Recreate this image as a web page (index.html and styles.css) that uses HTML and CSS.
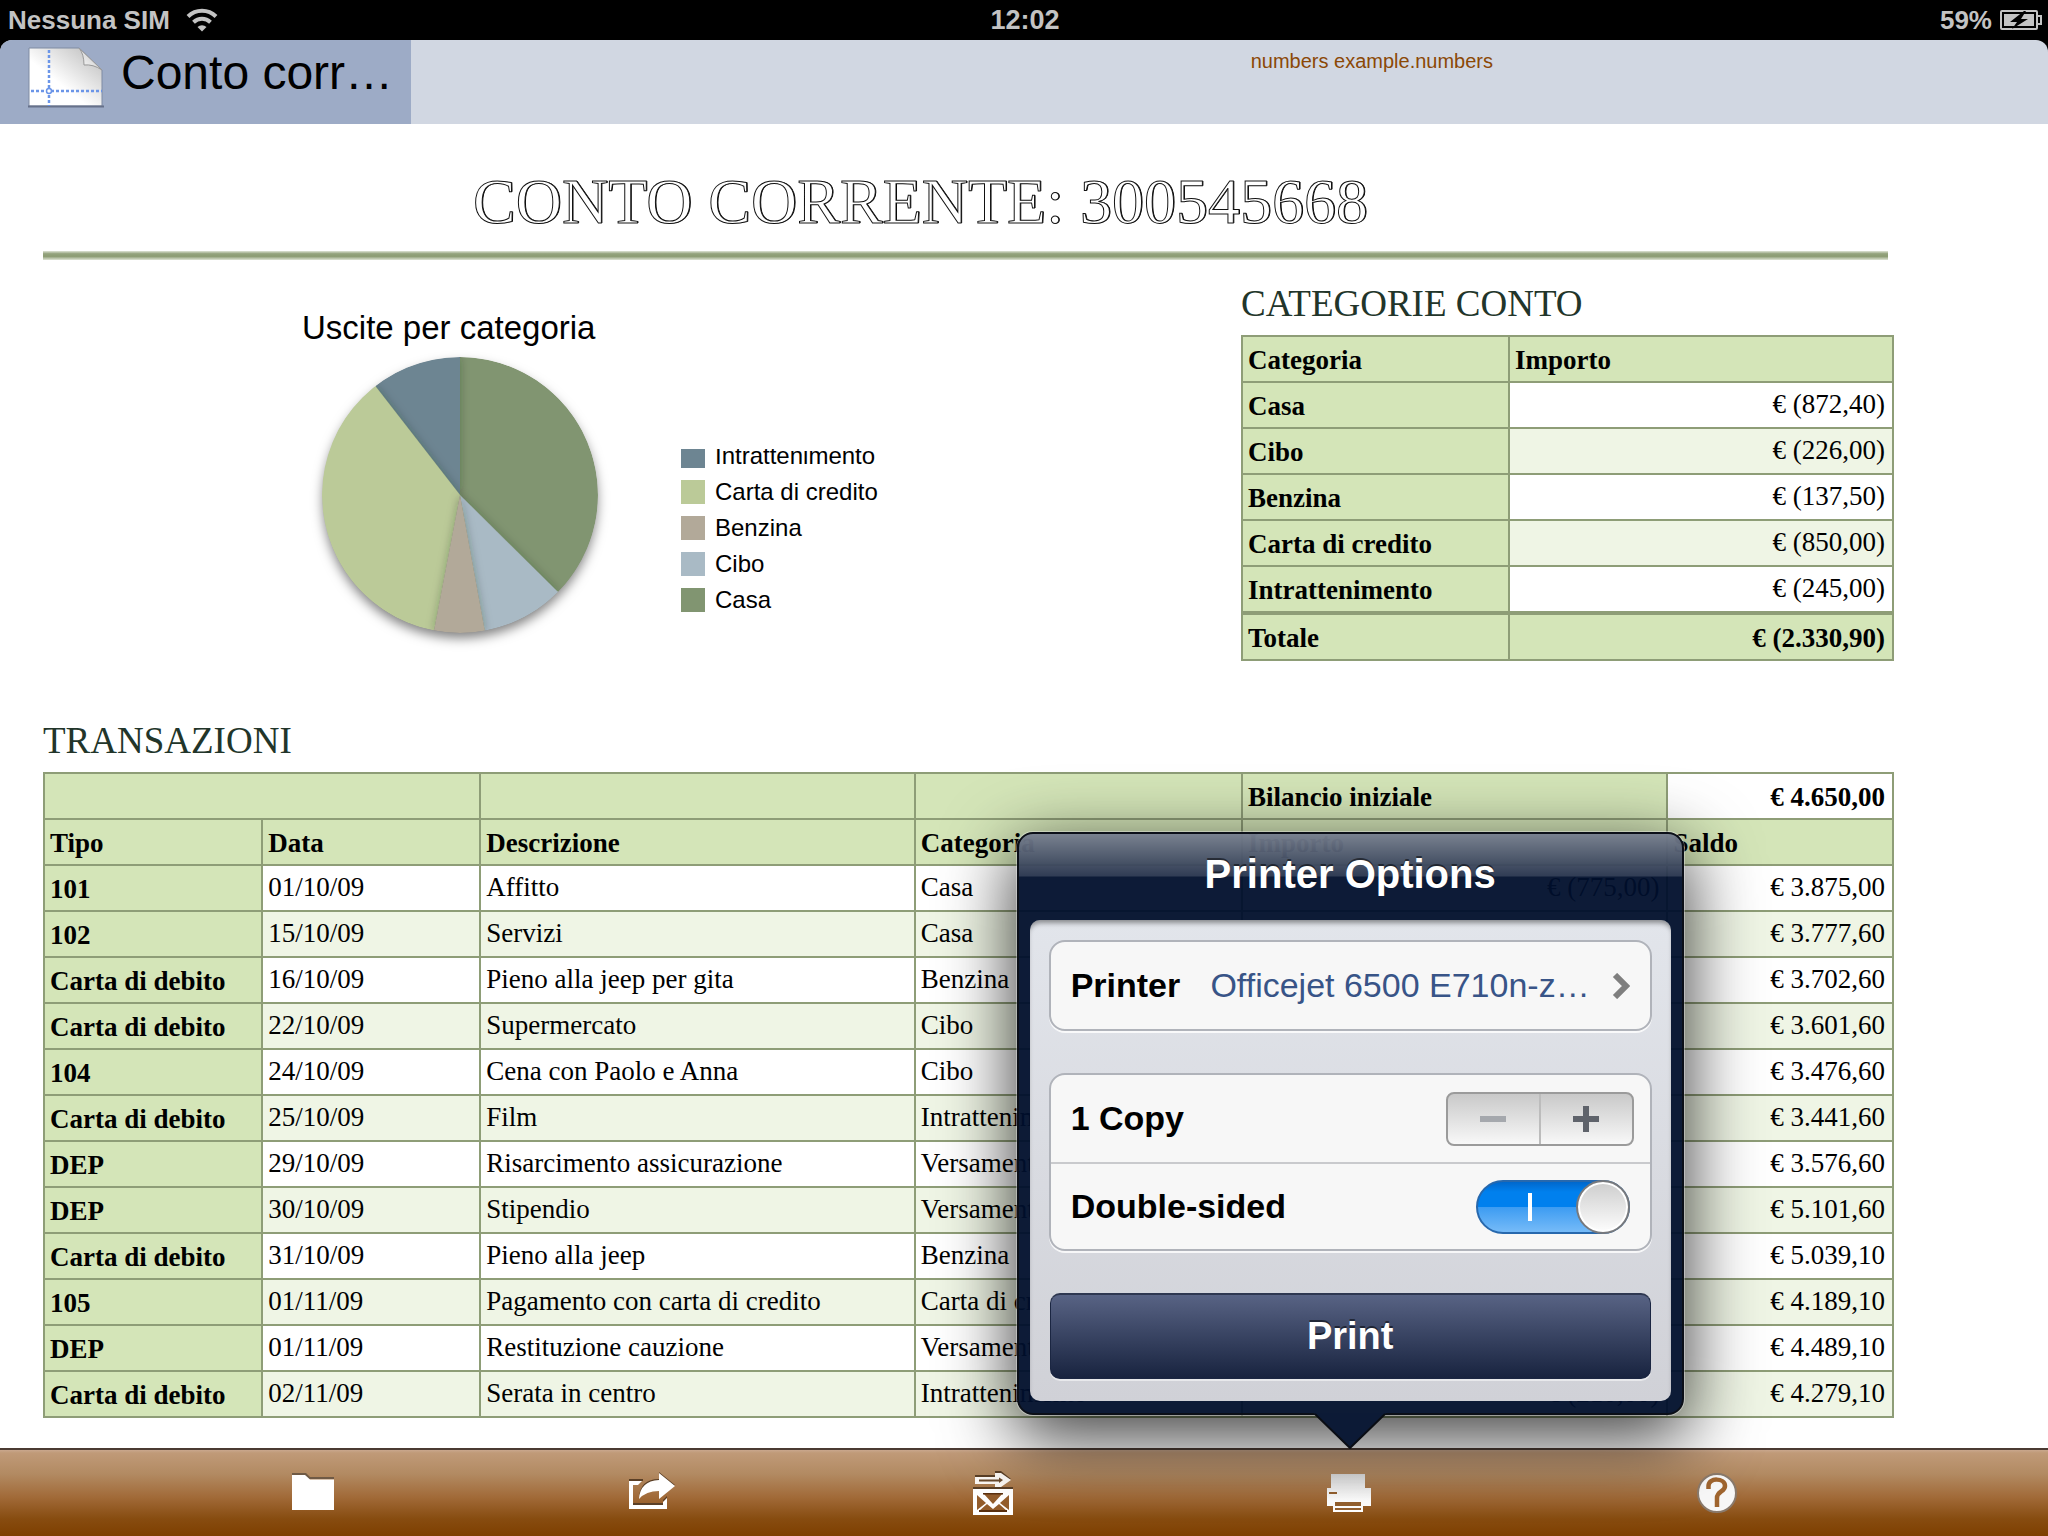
FILE: index.html
```html
<!DOCTYPE html>
<html lang="it">
<head>
<meta charset="utf-8">
<meta name="viewport" content="width=device-width, initial-scale=1">
<title>numbers example.numbers</title>
<link rel="stylesheet" href="styles.css">
</head>
<body>
<div class="app">
  <header class="status">
    <div class="status-side">
      <span>Nessuna SIM</span>
      <svg class="wifi" viewBox="0 0 32 24" width="32" height="24" aria-hidden="true">
        <path d="M2 8.500A20 20 0 0 1 30 8.500" fill="none" stroke="#c3c3c3" stroke-width="4"/>
        <path d="M7.500 14.200A12.500 12.500 0 0 1 24.500 14.200" fill="none" stroke="#c3c3c3" stroke-width="4"/>
        <path d="M16 23.500L11.500 19A6.500 6.500 0 0 1 20.500 19Z" fill="#c3c3c3"/>
      </svg>
    </div>
    <time class="clock">12:02</time>
    <div class="status-side status-right">
      <span>59%</span>
      <svg viewBox="0 0 42 20" width="42" height="20" aria-hidden="true">
        <rect x="1" y="1" width="36" height="18" rx="1" fill="none" stroke="#c3c3c3" stroke-width="2"/>
        <path d="M38 6h3v8h-3" fill="none" stroke="#c3c3c3" stroke-width="2"/>
        <rect x="4" y="4" width="30" height="12" fill="#c3c3c3"/>
        <path d="M24 1L10 12H17L12 19L28 9H21L26 1Z" fill="#000"/>
      </svg>
    </div>
  </header>

  <nav class="tabs">
    <button class="tab" type="button">
      <svg class="doc" viewBox="0 0 78 62" width="78" height="62" aria-hidden="true">
        <defs>
          <linearGradient id="paper" x1="1" y1="0" x2="0" y2="1"><stop offset="0" stop-color="#b8b8b8"/><stop offset=".6" stop-color="#fff"/></linearGradient>
          <linearGradient id="fold" x1="1" y1="0" x2="0" y2="1"><stop offset="0" stop-color="#bbb"/><stop offset="1" stop-color="#fff"/></linearGradient>
        </defs>
        <path d="M2 2H52L75 24V60H2Z" fill="url(#paper)" stroke="#7f8ba3" stroke-width="1"/>
        <path d="M1 60.500H77" stroke="#66718a" stroke-width="2"/>
        <path d="M52 2Q57 8 57 19Q66 18 75 24Z" fill="url(#fold)" stroke="#999" stroke-width="1"/>
        <path d="M22 4V60M4 45H75" fill="none" stroke="#6b95e8" stroke-width="2.500" stroke-dasharray="3 2"/>
        <circle cx="22" cy="45" r="2.500" fill="#fff" stroke="#6b95e8" stroke-width="1.500"/>
      </svg>
      <span>Conto corr…</span>
    </button>
    <span class="filename">numbers example.numbers</span>
  </nav>

  <main class="sheet">
    <h1 class="title">CONTO CORRENTE: 300545668</h1>
    <hr class="rule">
    <div class="summary">
      <figure class="chart">
        <figcaption class="chart-title">Uscite per categoria</figcaption>
        <div class="chart-body">
          <svg viewBox="-158 -147 316 310" width="316" height="310" role="img" aria-label="Uscite per categoria">
            <defs>
              <clipPath id="disc"><circle r="138"/></clipPath>
              <filter id="edge" x="-20%" y="-20%" width="140%" height="140%"><feDropShadow dx="0" dy="0" stdDeviation="5" flood-color="#1c2a20" flood-opacity=".3"/></filter>
              <filter id="cast" x="-20%" y="-20%" width="140%" height="140%"><feDropShadow dx="0" dy="6" stdDeviation="6" flood-opacity=".5"/></filter>
            </defs>
            <circle r="137" fill="#819571" filter="url(#cast)"/>
            <g clip-path="url(#disc)">
              <path d="M0 0V-138A138 138 0 0 1 98 97.100Z" fill="#819571"/>
              <path d="M0 0L-84.700 -109A138 138 0 0 1 0 -138Z" fill="#6d8592" filter="url(#edge)"/>
              <path d="M0 0L-26 135.500A138 138 0 0 1 -84.700 -109Z" fill="#bbca98" filter="url(#edge)"/>
              <path d="M0 0L98 97.100A138 138 0 0 1 24.800 135.700Z" fill="#a9bac5" filter="url(#edge)"/>
              <path d="M0 0L24.800 135.700A138 138 0 0 1 -26 135.500Z" fill="#b2a999" filter="url(#edge)"/>
            </g>
          </svg>
          <ul class="legend">
            <li><i class="swatch intrattenimento"></i>Intrattenimento</li>
            <li><i class="swatch carta"></i>Carta di credito</li>
            <li><i class="swatch benzina"></i>Benzina</li>
            <li><i class="swatch cibo"></i>Cibo</li>
            <li><i class="swatch casa"></i>Casa</li>
          </ul>
        </div>
      </figure>
      <section>
        <h2 class="heading">CATEGORIE CONTO</h2>
        <table class="grid categories">
          <colgroup><col class="cat-name"><col></colgroup>
          <thead><tr><th>Categoria</th><th>Importo</th></tr></thead>
          <tbody>
            <tr><th>Casa</th><td class="num">€ (872,40)</td></tr>
            <tr><th>Cibo</th><td class="num">€ (226,00)</td></tr>
            <tr><th>Benzina</th><td class="num">€ (137,50)</td></tr>
            <tr><th>Carta di credito</th><td class="num">€ (850,00)</td></tr>
            <tr><th>Intrattenimento</th><td class="num">€ (245,00)</td></tr>
          </tbody>
          <tfoot><tr><th>Totale</th><th class="num">€ (2.330,90)</th></tr></tfoot>
        </table>
      </section>
    </div>

    <section>
      <h2 class="heading">TRANSAZIONI</h2>
      <table class="grid transactions">
        <colgroup><col class="c-tipo"><col class="c-data"><col class="c-desc"><col class="c-cat"><col class="c-imp"><col class="c-saldo"></colgroup>
        <thead>
          <tr><th colspan="2"></th><th></th><th></th><th>Bilancio iniziale</th><th class="num opening">€ 4.650,00</th></tr>
          <tr><th>Tipo</th><th>Data</th><th>Descrizione</th><th>Categoria</th><th>Importo</th><th>Saldo</th></tr>
        </thead>
        <tbody>
          <tr><th>101</th><td>01/10/09</td><td>Affitto</td><td>Casa</td><td class="num">€ (775,00)</td><td class="num">€ 3.875,00</td></tr>
          <tr><th>102</th><td>15/10/09</td><td>Servizi</td><td>Casa</td><td class="num">€ (97,40)</td><td class="num">€ 3.777,60</td></tr>
          <tr><th>Carta di debito</th><td>16/10/09</td><td>Pieno alla jeep per gita</td><td>Benzina</td><td class="num">€ (75,00)</td><td class="num">€ 3.702,60</td></tr>
          <tr><th>Carta di debito</th><td>22/10/09</td><td>Supermercato</td><td>Cibo</td><td class="num">€ (101,00)</td><td class="num">€ 3.601,60</td></tr>
          <tr><th>104</th><td>24/10/09</td><td>Cena con Paolo e Anna</td><td>Cibo</td><td class="num">€ (125,00)</td><td class="num">€ 3.476,60</td></tr>
          <tr><th>Carta di debito</th><td>25/10/09</td><td>Film</td><td>Intrattenimento</td><td class="num">€ (35,00)</td><td class="num">€ 3.441,60</td></tr>
          <tr><th>DEP</th><td>29/10/09</td><td>Risarcimento assicurazione</td><td>Versamento</td><td class="num">€ 135,00</td><td class="num">€ 3.576,60</td></tr>
          <tr><th>DEP</th><td>30/10/09</td><td>Stipendio</td><td>Versamento</td><td class="num">€ 1.525,00</td><td class="num">€ 5.101,60</td></tr>
          <tr><th>Carta di debito</th><td>31/10/09</td><td>Pieno alla jeep</td><td>Benzina</td><td class="num">€ (62,50)</td><td class="num">€ 5.039,10</td></tr>
          <tr><th>105</th><td>01/11/09</td><td>Pagamento con carta di credito</td><td>Carta di credito</td><td class="num">€ (850,00)</td><td class="num">€ 4.189,10</td></tr>
          <tr><th>DEP</th><td>01/11/09</td><td>Restituzione cauzione</td><td>Versamento</td><td class="num">€ 300,00</td><td class="num">€ 4.489,10</td></tr>
          <tr><th>Carta di debito</th><td>02/11/09</td><td>Serata in centro</td><td>Intrattenimento</td><td class="num">€ (210,00)</td><td class="num">€ 4.279,10</td></tr>
        </tbody>
      </table>
    </section>
  </main>

  <footer class="toolbar">
    <button type="button" aria-label="Apri">
      <svg viewBox="0 0 44 44" width="44" height="44" aria-hidden="true">
        <path d="M1 2H15L19 6H43V8H1Z" fill="#6f5a45"/>
        <path d="M1 4H14L19 8.500H43V39H1Z" fill="#fff"/>
      </svg>
    </button>
    <button type="button" aria-label="Condividi">
      <svg viewBox="0 0 46 44" width="46" height="44" aria-hidden="true">
        <path d="M0 8H14V10H0ZM4 32H34V34H4ZM30 1L46 14L44 15L30 3ZM10 27Q11 8 30 8V10Q14 10 10 27ZM34 29L38 25V27L34 31Z" fill="#5a3f26"/>
        <path d="M0 10H13L9 14H4V34H34V31L38 27V38H0Z" fill="#fff"/>
        <path d="M30 2L46 15L30 28V20Q17 20 10 28Q11 10 30 9Z" fill="#fff"/>
      </svg>
    </button>
    <button type="button" aria-label="Invia per e-mail">
      <svg viewBox="0 0 40 44" width="40" height="44" aria-hidden="true">
        <path d="M2 4H22V0H28L38 8H30V6H2ZM0 16H40V18H0Z" fill="#5a3f26"/>
        <path d="M2 6H22V2H28L38 9L28 16H22V13H2Z" fill="#fcf8f4"/>
        <path d="M6 8.500H26V6.500L30 9L26 12V10.500H6Z" fill="#6b4a2c"/>
        <rect y="18" width="40" height="26" fill="#fff"/>
        <path d="M10 22H30L20 33ZM4 24L13 32L4 39ZM36 24L27 32L36 39ZM6 40L14 33L20 38L26 33L34 40Z" fill="#945d2c"/>
        <path d="M10 22H30V23.500H10ZM6 39H34V41H6Z" fill="#5a3010"/>
      </svg>
    </button>
    <button type="button" aria-label="Stampa">
      <svg viewBox="0 0 44 38" width="44" height="38" aria-hidden="true">
        <defs><linearGradient id="printer" x1="0" y1="0" x2="0" y2="1"><stop offset="0" stop-color="#ddd"/><stop offset=".7" stop-color="#fff"/></linearGradient></defs>
        <path d="M4 0H38V14H44V32H36V38H6V32H0V14H4Z" fill="url(#printer)"/>
        <path d="M2 18H10V20H2ZM8 28H34V32H8ZM8 34H34V36H8Z" fill="#94602e"/>
      </svg>
    </button>
    <button type="button" aria-label="Aiuto">
      <svg viewBox="0 0 42 42" width="42" height="42" aria-hidden="true">
        <circle cx="21" cy="21" r="19" fill="#f8f8f8" stroke="#8a7a6c" stroke-width="2"/>
        <path d="M12.500 17V14C12.500 5 29 6 29 14C29 20 21 19 21 26V35" fill="none" stroke="#a0652f" stroke-width="4.500"/>
      </svg>
    </button>
  </footer>

  <section class="popover" role="dialog" aria-labelledby="options-title">
    <div class="panel">
      <h2 class="panel-title" id="options-title">Printer Options</h2>
      <form class="panel-body">
        <div class="group">
          <button class="row link" type="button">
            <span class="label">Printer</span>
            <span class="value">Officejet 6500 E710n-z…</span>
            <svg viewBox="0 0 18 26" width="18" height="26" aria-hidden="true"><path d="M3 2L14 13L3 24" fill="none" stroke="#7f7f7f" stroke-width="6"/></svg>
          </button>
        </div>
        <div class="group">
          <div class="row">
            <span class="label">1 Copy</span>
            <div class="stepper">
              <button type="button" aria-label="Fewer copies" disabled><svg viewBox="0 0 28 28" width="28" height="28" aria-hidden="true"><path d="M1 14H27" stroke="#a5a8ad" stroke-width="6"/></svg></button>
              <button type="button" aria-label="More copies"><svg viewBox="0 0 28 28" width="28" height="28" aria-hidden="true"><path d="M1 14H27M14 1V27" stroke="#5f636b" stroke-width="6"/></svg></button>
            </div>
          </div>
          <div class="row">
            <label class="label" for="duplex">Double-sided</label>
            <input class="switch" id="duplex" type="checkbox" checked>
          </div>
        </div>
        <button class="print" type="button">Print</button>
      </form>
    </div>
    <svg class="arrow" viewBox="0 0 72 36" width="72" height="36" aria-hidden="true"><path d="M0 0L36 35L72 0Z" fill="#0c1a36"/><path d="M1 1L36 35L71 1" fill="none" stroke="#0a0d14" stroke-width="2"/></svg>
  </section>
</div>
</body>
</html>
```
FILE: styles.css
```css
*,
*::before,
*::after {
  box-sizing: border-box;
}

body {
  margin: 0;
  background: #000;
  color: #000;
  font-family: "Liberation Sans", Arial, sans-serif;
}

button {
  margin: 0;
  padding: 0;
  border: 0;
  background: none;
  color: inherit;
  font: inherit;
}

.app {
  position: relative;
  display: flex;
  flex-direction: column;
  min-height: 100vh;
  overflow: hidden;
}

/* Status bar */
.status {
  display: grid;
  grid-template-columns: 1fr auto 1fr;
  align-items: center;
  height: 40px;
  padding: 0 6px 0 8px;
  color: #c3c3c3;
  font-size: 26px;
  font-weight: bold;
}

.status-side {
  display: flex;
  align-items: center;
  gap: 16px;
}

.status-right {
  justify-content: flex-end;
  gap: 8px;
}

.clock {
  font-size: 27px;
}

/* Document tabs */
.tabs {
  display: flex;
  align-items: stretch;
  height: 84px;
  border-radius: 12px 12px 0 0;
  background: #d1d7e2;
  overflow: hidden;
}

.tab {
  display: flex;
  align-items: flex-start;
  gap: 16px;
  width: 411px;
  padding: 6px 0 0 27px;
  background: #9dabc6;
  font-size: 48px;
  line-height: 54px;
  white-space: nowrap;
}

.filename {
  margin: 9px 0 0 41%;
  color: #8b4806;
  font-size: 20px;
  line-height: 24px;
}

/* Spreadsheet */
.sheet {
  flex: 1;
  padding: 40px 154px 20px 43px;
  background: #fff;
  font-family: "Liberation Serif", "Times New Roman", serif;
}

.title {
  margin: 0;
  padding-right: 96px;
  color: #fff;
  font-size: 64px;
  font-weight: normal;
  line-height: 76px;
  text-align: center;
  text-shadow: 1px 0 0 #000;
  -webkit-text-stroke: 1px #111;
}

.rule {
  height: 9px;
  margin: 11px 6px 22px 0;
  border: 0;
  background: linear-gradient(#dfe4d6, #94a37d 30%, #8c9c73 60%, #dfe4d6);
}

.summary {
  display: grid;
  grid-template-columns: 1fr 653px;
  margin-bottom: 58px;
}

.chart {
  margin: 26px 0 0 259px;
  font-family: "Liberation Sans", Arial, sans-serif;
}

.chart-title {
  font-size: 33px;
  line-height: 40px;
}

.chart-body {
  display: flex;
  align-items: flex-start;
  gap: 63px;
}

.legend {
  display: flex;
  flex-direction: column;
  gap: 12px;
  margin: 101px 0 0;
  padding: 0;
  overflow: hidden;
  list-style: none;
  font-size: 24px;
  line-height: 24px;
}

.legend li {
  display: flex;
  gap: 10px;
}

.legend li:first-child {
  margin-top: -5px;
}

.swatch {
  width: 24px;
  height: 24px;
}

.intrattenimento { background: #6d8592; }
.carta { background: #bbca98; }
.benzina { background: #b2a999; }
.cibo { background: #a9bac5; }
.casa { background: #819571; }

.heading {
  margin: 0 0 9px;
  color: #22352a;
  font-size: 37px;
  font-weight: normal;
  line-height: 44px;
}

.grid {
  width: 100%;
  table-layout: fixed;
  border-collapse: collapse;
  font-size: 27px;
  line-height: 30px;
  white-space: nowrap;
}

.grid th,
.grid td {
  height: 46px;
  padding: 6px 7px 8px 5px;
  border: 2px solid #8e9d77;
  text-align: left;
  vertical-align: top;
}

.grid th {
  padding: 8px 7px 6px 5px;
  background: #d4e5b8;
}

.grid .num {
  text-align: right;
}

.grid tbody tr:nth-child(even) td {
  background: #eff5e5;
}

.grid tfoot th {
  border-top-width: 4px;
}

.grid .opening {
  background: #fff;
}

.cat-name { width: 41%; }
.c-tipo { width: 11.8%; }
.c-data { width: 11.8%; }
.c-desc { width: 23.5%; }
.c-cat { width: 17.7%; }
.c-imp { width: 23%; }
.c-saldo { width: 12.2%; }

/* Bottom toolbar */
.toolbar {
  display: grid;
  grid-template-columns: 340fr 338fr 344fr 368fr 368fr;
  height: 88px;
  padding: 0 7.2% 0 7%;
  border-top: 2px solid #4b3b33;
  background: linear-gradient(#c9a78d, #c09a78 3px, #b28a62 28%, #a16a38 55%, #874c10 80%, #7e3f00);
}

.toolbar button {
  display: grid;
  place-items: center;
}

/* Printer popover */
.popover {
  position: absolute;
  bottom: 87px;
  left: calc(66% - 335px);
  display: flex;
  flex-direction: column;
  align-items: center;
  width: 667px;
}

.panel {
  width: 100%;
  padding: 0 11px 12px;
  border: 2px solid #0b0f18;
  border-radius: 16px;
  background: linear-gradient(rgba(255, 255, 255, .45), rgba(255, 255, 255, .15) 42px, transparent 43px), rgba(0, 15, 44, .95);
  box-shadow: 0 0 0 1px rgba(255, 255, 255, .35), 0 20px 70px 4px rgba(0, 0, 0, .75);
}

.panel-title {
  margin: 0;
  padding: 16px 0 22px;
  color: #fff;
  font-size: 40px;
  line-height: 48px;
  text-align: center;
  text-shadow: 0 -2px 0 rgba(0, 0, 0, .5);
}

.panel-body {
  display: flex;
  flex-direction: column;
  gap: 42px;
  padding: 20px 19px 22px;
  border-radius: 10px;
  background: linear-gradient(#e2e5eb, #d0d1d7);
  box-shadow: inset 0 5px 5px -2px rgba(0, 0, 0, .4);
}

.group {
  border: 2px solid #b0b3ba;
  border-radius: 16px;
  background: #f7f7f7;
  box-shadow: 0 2px 0 rgba(255, 255, 255, .8);
}

.row {
  display: flex;
  align-items: center;
  justify-content: space-between;
  width: 100%;
  height: 87px;
  padding: 0 16px 0 20px;
  font-size: 34px;
}

.row + .row {
  border-top: 2px solid #c9cacd;
}

.row.link {
  padding-right: 20px;
}

.label {
  font-weight: bold;
}

.value {
  flex: 1;
  padding-right: 22px;
  color: #385487;
  text-align: right;
}

.stepper {
  display: flex;
  width: 188px;
  height: 54px;
  border: 2px solid #9b9b9b;
  border-radius: 8px;
  background: linear-gradient(#c9c9c9, #f8f8f8);
}

.stepper button {
  display: grid;
  flex: 1;
  place-items: center;
}

.stepper button + button {
  border-left: 2px solid #bcbcbc;
}

.switch {
  position: relative;
  width: 154px;
  height: 54px;
  margin: 0 4px 0 0;
  border: 2px solid #2768ad;
  border-radius: 27px;
  background: linear-gradient(#0067cc, #0080ee 20%, #0080ee 50%, #3d9cf2 51%, #76bbf8);
  appearance: none;
}

.switch::before {
  content: "";
  position: absolute;
  top: 11px;
  left: 50px;
  width: 4px;
  height: 28px;
  background: #fff;
}

.switch::after {
  content: "";
  position: absolute;
  top: -2px;
  right: -2px;
  width: 54px;
  height: 54px;
  border: 2px solid #77797d;
  border-radius: 50%;
  background: linear-gradient(#cdcdcd, #fdfdfd);
  box-shadow: inset 0 0 0 2px #fff;
}

.print {
  height: 86px;
  margin: 0 1px;
  border: 1px solid #1b2642;
  border-top: 2px solid #2e3750;
  border-radius: 10px;
  background: linear-gradient(#586384, #18233f);
  box-shadow: 0 2px 0 rgba(255, 255, 255, .5);
  color: #fff;
  font-size: 38px;
  font-weight: bold;
  text-shadow: 0 -2px 0 rgba(0, 0, 0, .5);
}

.arrow {
  position: relative;
  margin-top: -2px;
}
```
